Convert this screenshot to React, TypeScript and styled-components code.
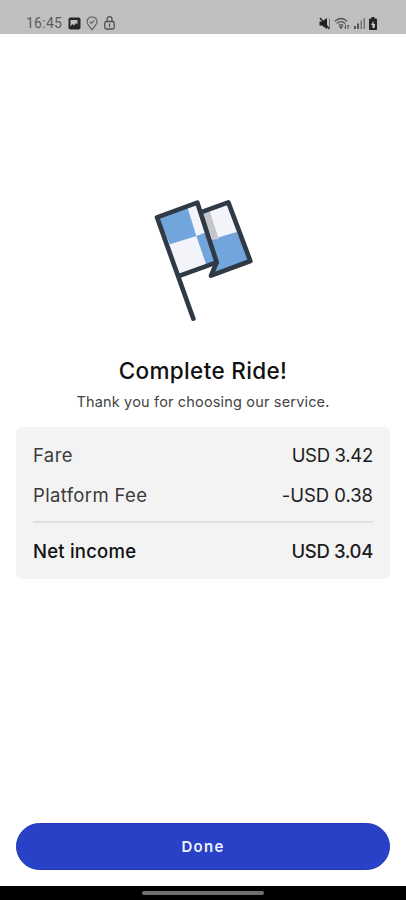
import React from "react";
import styled, { createGlobalStyle } from "styled-components";

const GlobalStyle = createGlobalStyle`
  * { box-sizing: border-box; }
  body { margin: 0; background: #fff; }
`;

const Screen = styled.div`
  width: 406px;
  height: 900px;
  display: flex;
  flex-direction: column;
  background: #fff;
  color: #111;
  font-family: Inter, "Liberation Sans", sans-serif;
  overflow: hidden;
`;

const StatusBar = styled.header`
  flex: none;
  height: 34px;
  padding: 13px 29px 0 26px;
  display: flex;
  justify-content: space-between;
  background: #bfbfbf;
  color: #5c5c5c;
`;

const StatusGroup = styled.div<{ $gap: number }>`
  display: flex;
  align-items: center;
  gap: ${(p) => p.$gap}px;
  height: 20px;
  svg { display: block; }
`;

const Clock = styled.span`
  width: 37px;
  margin-right: -1px;
  font: 400 14px/20px Roboto, sans-serif;
  letter-spacing: 0.25px;
  white-space: nowrap;
`;

const Content = styled.main`
  flex: 1;
  display: flex;
  flex-direction: column;
  align-items: center;
  padding: 156px 16px 16px;
`;

const Artwork = styled.svg`
  flex: none;
  margin-left: 4px;
`;

const Title = styled.h1`
  margin: 26px 0 0;
  font-size: 22.5px;
  line-height: 30px;
  font-weight: 500;
  letter-spacing: 0.35px;
  white-space: nowrap;
`;

const Subtitle = styled.p`
  margin: 6px 0 0;
  font-size: 14.5px;
  line-height: 20px;
  color: #444;
  letter-spacing: 0.17px;
  white-space: nowrap;
`;

const Summary = styled.section`
  width: 374px;
  height: 152px;
  margin-top: 15px;
  padding: 8px 17px;
  border-radius: 6px;
  background: #f3f3f3;
`;

const Row = styled.div<{ $strong?: boolean }>`
  display: flex;
  justify-content: space-between;
  align-items: center;
  height: 39px;
  font-size: 18.5px;
  font-weight: ${(p) => (p.$strong ? 500 : 400)};
  color: ${(p) => (p.$strong ? "#111" : "#3a3a3a")};

  & + & { height: 41px; }
`;

const Label = styled.span<{ $spacing: number }>`
  letter-spacing: ${(p) => p.$spacing}px;
`;

const Amount = styled(Label)`
  color: #1c1c1c;
`;

const Divider = styled.hr`
  height: 2px;
  margin: 6px 0 8px;
  border: 0;
  background: #e0e0e0;
`;

const DoneButton = styled.button`
  width: 374px;
  height: 47px;
  margin-top: auto;
  padding: 0;
  border: 1px solid #2337b4;
  border-radius: 24px;
  background: #2941c6;
  color: #edf2ff;
  font: 600 15px/20px Inter, sans-serif;
  letter-spacing: 1.3px;
`;

const NavBar = styled.footer`
  flex: none;
  height: 14px;
  display: flex;
  justify-content: center;
  padding-top: 5px;
  background: #000;
`;

const HomeHandle = styled.div`
  width: 122px;
  height: 4px;
  border-radius: 2px;
  background: #707070;
`;

const PictureIcon = () => (
  <svg width="13" height="13" viewBox="0 0 13 13">
    <rect x="0.5" y="0.5" width="12" height="12" rx="2" fill="#262626" />
    <path d="M2.500 3h7v4.500L8 6 6 8.500 4.500 7l-2 2.500z" fill="#bfbfbf" />
  </svg>
);

const PinIcon = () => (
  <svg width="12" height="15" viewBox="0 0 12 15" fill="none" stroke="#666" strokeWidth="1.2">
    <path d="M6 13.8C4 11 1 8.500 1 5.800a5 5 0 0 1 10 0C11 8.500 8 11 6 13.800Z" />
    <path d="m3.800 5.800 1.600 1.500L8.200 4.300" />
  </svg>
);

const LockIcon = () => (
  <svg width="11" height="14" viewBox="0 0 11 14" fill="none" stroke="#505050" strokeWidth="1.3">
    <rect x="0.8" y="5.500" width="9.400" height="7.500" rx="1.500" />
    <path d="M3 5.500V3.200a2.500 2.500 0 0 1 5 0v2.300M5.500 7.500v3.500" />
  </svg>
);

const MuteIcon = () => (
  <svg width="12" height="13" viewBox="0 0 12 13">
    <path d="M.5 4.500H3L8 1v11L3 8.500H.5z" fill="#222" />
    <path d="m1 1 9.500 11" stroke="#222" strokeWidth="1.400" />
    <path d="M10.500 1.500v10" stroke="#777" strokeWidth="1" />
  </svg>
);

const WifiIcon = () => (
  <svg width="16" height="13" viewBox="0 0 16 13" fill="none" stroke="#555" strokeWidth="1.300">
    <path d="M.8 4.200q6.200-5.400 12.400 0M2.800 6.400q4.200-3.600 8.400 0M4.800 8.500q2.200-1.800 4.400 0" />
    <path d="m6 9.800 1 1.400 1-1.400z" fill="#555" />
    <path d="M11.500 7.500v4m-1.200-1.300 1.200 1.400M14 12V8m1.200 1.300L14 7.900" strokeWidth="1" />
  </svg>
);

const SignalIcon = () => (
  <svg width="12" height="12" viewBox="0 0 12 12">
    <path d="M0 9h2v3H0zM3 6.500h2V12H3z" fill="#555" />
    <path d="M6.500 3.500h1.500V12H6.500zM9.500 1H11v11H9.500z" fill="#777" />
  </svg>
);

const BatteryIcon = () => (
  <svg width="8" height="13" viewBox="0 0 8 13">
    <path d="M2.500 0h3v1.500H7q1 0 1 1V12q0 1-1 1H1q-1 0-1-1V2.500q0-1 1-1h1.500z" fill="#242424" />
    <path d="M4.500 4 2 8h1.500v3h2L6 7H4.500z" fill="#d6d6d6" />
  </svg>
);

const FlagArt = () => (
  <Artwork width="130" height="140" viewBox="0 0 390 420">
    <path d="M184 65 265 37 331 213 213 258 230 217Z" fill="#f3f4fa" />
    <path d="M207 151 290 126 331 213 213 258 230 217Z" fill="#71a5dc" />
    <path d="m184 68 24-8 28 87-18 3z" fill="#c5c6cb" />
    <path d="M51 82 172 38 230 217 120 257Z" fill="#f3f4fa" />
    <path d="M51 82 142 51 169 138 90 163Z" fill="#71a5dc" />
    <path d="M169 138 203 125 230 217 199 225Z" fill="#71a5dc" />
    <g fill="none" stroke="#303946" strokeWidth="14" strokeLinecap="round" strokeLinejoin="round">
      <path d="M160 386 51 82 172 38 230 217 120 257" />
      <path d="M188 65 265 37 331 213 213 257 230 217" />
    </g>
  </Artwork>
);

const fares = [
  { label: "Fare", amount: "USD 3.42", labelSpacing: 0.4, amountSpacing: -0.3 },
  { label: "Platform Fee", amount: "-USD 0.38", labelSpacing: 0.35, amountSpacing: -0.05 },
];

export default function App() {
  return (
    <>
      <GlobalStyle />
      <Screen>
        <StatusBar>
          <StatusGroup $gap={5.5}>
            <Clock>16:45</Clock>
            <PictureIcon />
            <PinIcon />
            <LockIcon />
          </StatusGroup>
          <StatusGroup $gap={3.5}>
            <MuteIcon />
            <WifiIcon />
            <SignalIcon />
            <BatteryIcon />
          </StatusGroup>
        </StatusBar>
        <Content>
          <FlagArt />
          <Title>Complete Ride!</Title>
          <Subtitle>Thank you for choosing our service.</Subtitle>
          <Summary>
            {fares.map((f) => (
              <Row key={f.label}>
                <Label $spacing={f.labelSpacing}>{f.label}</Label>
                <Amount $spacing={f.amountSpacing}>{f.amount}</Amount>
              </Row>
            ))}
            <Divider />
            <Row $strong>
              <Label $spacing={0.22}>Net income</Label>
              <Amount $spacing={-0.35}>USD 3.04</Amount>
            </Row>
          </Summary>
          <DoneButton>Done</DoneButton>
        </Content>
        <NavBar>
          <HomeHandle />
        </NavBar>
      </Screen>
    </>
  );
}
